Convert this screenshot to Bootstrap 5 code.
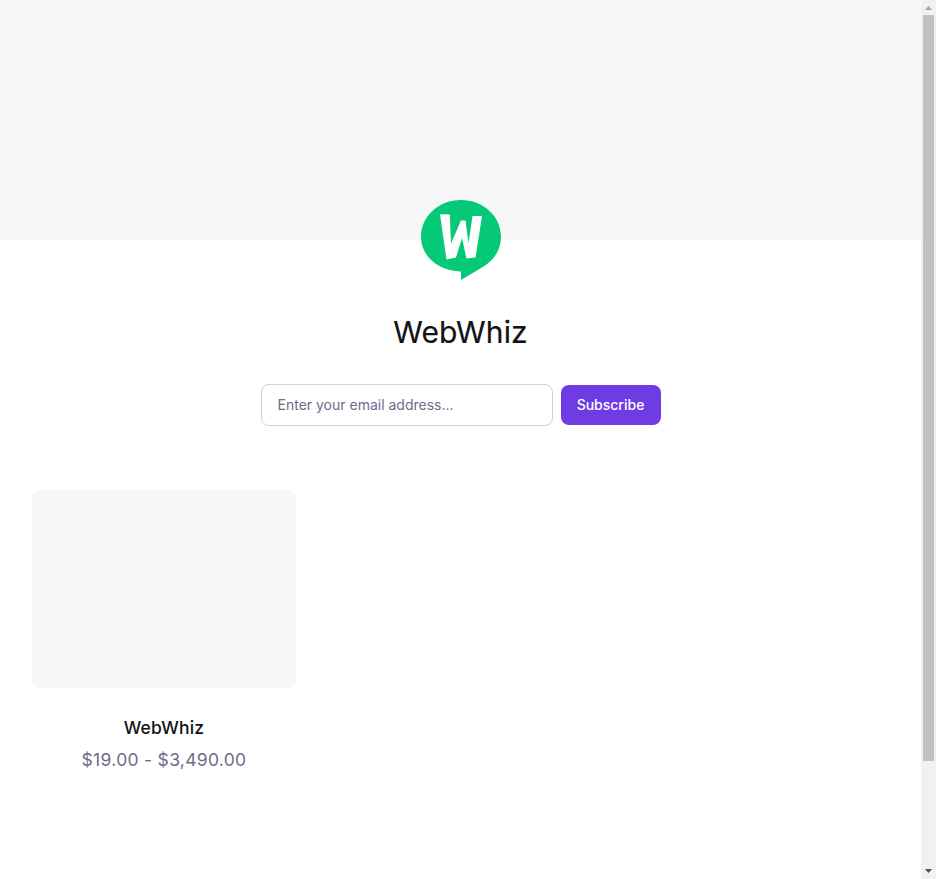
<!DOCTYPE html>
<html lang="en">
<head>
<meta charset="utf-8">
<meta name="viewport" content="width=device-width, initial-scale=1">
<title>WebWhiz</title>
<link href="https://cdn.jsdelivr.net/npm/bootstrap@5.3.0/dist/css/bootstrap.min.css" rel="stylesheet">
<style>
body{font-family:Inter,"Liberation Sans",sans-serif;color:#121217;background:#fff}
.app{height:879px}
.banner{height:240px;background:#f7f7f7}
.avatar{width:80px;height:80px;margin-top:-40px}
.store-name{font-size:30px;line-height:40px;font-weight:400;letter-spacing:.15px;-webkit-text-stroke:.2px #121217;margin-top:32px}
.signup{margin-top:32px}
.signup .form-control{width:292px;height:42px;border:1px solid #d1d1d6;border-radius:8px;font-size:14px;padding:0 16px 2px;line-height:20px}
.signup .form-control::placeholder{color:#6c6c89;opacity:1}
.signup .btn{background:#6f3be3;color:#fff;width:100px;height:40px;border:0;border-radius:8px;font-size:14px;line-height:20px;font-weight:500}
.products{margin-top:64px;padding:0 32px}
.product{width:264px}
.thumb{height:198px;border-radius:8px;background:#f7f7f7}
.title{font-size:17.5px;line-height:24px;font-weight:500;letter-spacing:.2px;margin-top:28px}
.price{font-size:17.5px;line-height:28px;letter-spacing:.3px;color:#6c6c89;margin-top:6px}
.scroller{width:15px;background:#f1f1f1}
.thumb-bar{width:11px;height:746px;background:#c1c1c1}
</style>
</head>
<body>
<div class="app d-flex overflow-hidden">
  <main class="flex-grow-1">
    <div class="banner"></div>
    <header class="d-flex flex-column align-items-center">
      <svg class="avatar" viewBox="0 0 80 80" role="img" aria-label="WebWhiz logo">
        <path fill="#05c976" d="M40 0C62 0 80 16 80 37C80 51 72 61 61 67.500L40 80V71.500C17 71 0 56 0 37C0 16 18 0 40 0Z"/>
        <path fill="#fff" d="M19 14.300L28.800 14.600L30 43.500L40 20.500H44.500L47.500 43L51.500 16L61 16L54.500 57.500L45.500 58.500L41 38L35 57.500L25.500 59.500Z"/>
      </svg>
      <h1 class="store-name mb-0">WebWhiz</h1>
      <form class="signup d-flex align-items-center gap-2">
        <input class="form-control" type="email" placeholder="Enter your email address...">
        <button class="btn p-0" type="button">Subscribe</button>
      </form>
    </header>
    <section class="products">
      <article class="product text-center">
        <div class="thumb"></div>
        <h2 class="title mb-0">WebWhiz</h2>
        <p class="price mb-0">$19.00 - $3,490.00</p>
      </article>
    </section>
  </main>
  <div class="scroller d-flex flex-column align-items-center flex-shrink-0">
    <svg width="15" height="15" class="flex-shrink-0"><path fill="#a3a3a3" d="M4 10L7.500 6L11 10Z"/></svg>
    <div class="thumb-bar flex-shrink-0"></div>
    <svg width="15" height="15" class="flex-shrink-0 mt-auto"><path fill="#505050" d="M4 5L7.500 9L11 5Z"/></svg>
  </div>
</div>
<script src="https://cdn.jsdelivr.net/npm/bootstrap@5.3.0/dist/js/bootstrap.bundle.min.js"></script>
</body>
</html>
